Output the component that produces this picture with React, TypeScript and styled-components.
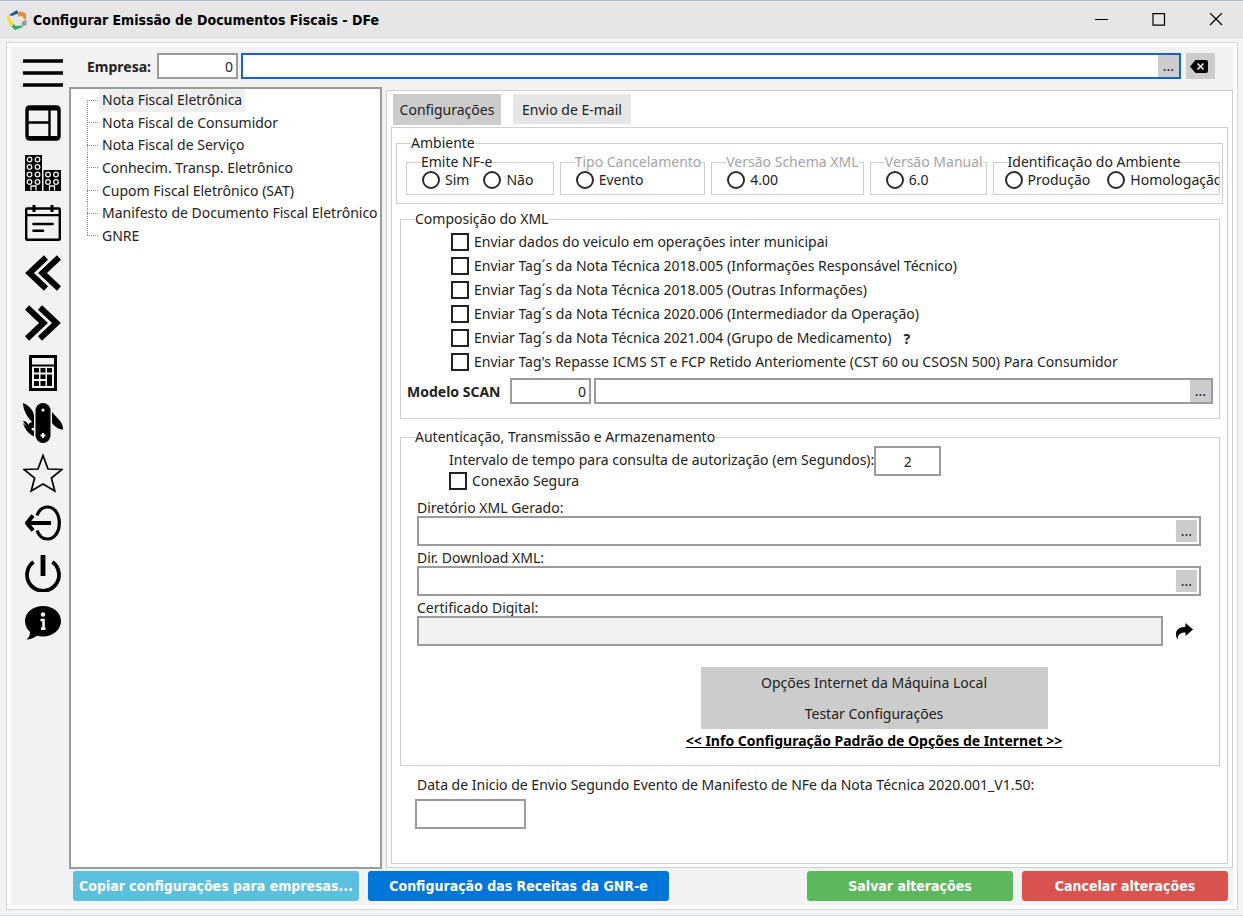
import React from "react";
import styled, { createGlobalStyle } from "styled-components";

const line = "#cfcfcf";
const edge = "#9b9b9b";
const grey = "#cccccc";

const GlobalStyle = createGlobalStyle`
  * { box-sizing: border-box; }
  body { margin: 0; background: #f3f3f3; }
  body, button, input { font-family: "Noto Sans", "Open Sans", sans-serif; font-size: 14px; color: #222; }
  button { border: 0; padding: 0; background: none; cursor: pointer; }
`;

const Window = styled.div`
  min-height: 100vh;
  display: flex;
  flex-direction: column;
  border-top: 1px solid #b3bfd3;
  border-bottom: 1px solid #d3dbe6;
`;

const TitleBar = styled.header`
  display: flex;
  align-items: center;
  height: 38px;
  padding-left: 7px;
  gap: 6px;
  background: #e6e6e6;
`;

const Title = styled.h1`
  flex: 1;
  margin: 0;
  font-family: "DejaVu Sans Condensed", "DejaVu Sans", sans-serif;
  font-size: 14px;
  font-weight: 700;
  color: #000;
`;

const WindowControls = styled.div`
  display: flex;
  gap: 3px;
`;

const WindowButton = styled.button`
  width: 54px;
  height: 36px;
  display: grid;
  place-items: center;
`;

const Frame = styled.div`
  flex: 1;
  display: flex;
  margin: 3px 5px 5px 6px;
  border: 1px solid #d6d6d6;
  padding: 4px;
  background: #fff;
`;

const Shell = styled.div`
  flex: 1;
  min-width: 0;
  display: flex;
  background: #f2f2f2;
`;

const Sidebar = styled.nav`
  width: 58px;
  flex: none;
  display: flex;
  flex-direction: column;
  padding: 1px 0 0 7px;
`;

const SideButton = styled.button`
  height: 50px;
  width: 50px;
  display: grid;
  place-items: center;
`;

const Main = styled.main`
  flex: 1;
  min-width: 0;
  display: flex;
  flex-direction: column;
`;

const CompanyBar = styled.div`
  display: flex;
  align-items: center;
  gap: 3px;
  padding: 6px 18px 8px;
`;

const BoldLabel = styled.label<{ $width: number }>`
  width: ${(p) => p.$width}px;
  flex: none;
  font-weight: 700;
  white-space: nowrap;
`;

const NumberBox = styled.input<{ $width: number; $height?: number; $align?: string }>`
  width: ${(p) => p.$width}px;
  height: ${(p) => p.$height ?? 26}px;
  flex: none;
  padding: 0 3px;
  border: 2px solid ${edge};
  border-radius: 0;
  background: #fff;
  text-align: ${(p) => p.$align ?? "right"};
  outline: none;
`;

const Combo = styled.div<{ $active?: boolean; $tall?: boolean; $readOnly?: boolean }>`
  flex: 1;
  min-width: 0;
  height: ${(p) => (p.$tall ? 30 : 26)}px;
  display: flex;
  padding: ${(p) => (p.$tall ? "2px 2px 2px 0" : "0")};
  border: 2px solid ${(p) => (p.$active ? "#1560dc" : edge)};
  background: ${(p) => (p.$readOnly ? "#f2f2f2" : "#fff")};
`;

const ComboInput = styled.input`
  flex: 1;
  min-width: 0;
  border: 0;
  background: transparent;
  outline: none;
`;

const MoreButton = styled.button`
  width: 21px;
  background: ${grey};
  line-height: 20px;
`;

const ClearButton = styled.button`
  width: 29px;
  height: 26px;
  margin-left: 2px;
  padding-right: 3px;
  display: grid;
  place-items: center;
  background: ${grey};
`;

const Workspace = styled.div`
  flex: 1;
  display: flex;
  gap: 4px;
`;

const TreePanel = styled.aside`
  width: 313px;
  flex: none;
  border: 2px solid ${edge};
  background: #fff;
`;

const Tree = styled.ul`
  height: 158px;
  margin: 0;
  padding: 0 0 0 16px;
  list-style: none;
  display: grid;
  grid-template-rows: repeat(7, 1fr);
`;

const TreeItem = styled.li`
  display: flex;
  align-items: stretch;
  white-space: nowrap;
`;

const Branch = styled.span<{ $edge?: "first" | "last" }>`
  width: 12px;
  background-image: repeating-linear-gradient(#888 0 1px, transparent 1px 2px),
    repeating-linear-gradient(90deg, #888 0 1px, transparent 1px 2px);
  background-repeat: no-repeat;
  background-size: 1px ${(p) => (p.$edge ? "50%" : "100%")}, 11px 1px;
  background-position: ${(p) => (p.$edge === "first" ? "0 100%" : "0 0")}, 0 50%;
`;

const TreeButton = styled.button<{ $selected?: boolean }>`
  padding: 0 3px;
  line-height: 22px;
  background: ${(p) => (p.$selected ? "#efefef" : "transparent")};
`;

const TabPanel = styled.section`
  flex: 1;
  min-width: 0;
  display: flex;
  flex-direction: column;
  margin: 3px 0 1px;
  padding: 3px 4px;
  border: 1px solid ${line};
  background: #fff;
`;

const TabList = styled.div`
  display: flex;
  gap: 12px;
  padding: 0 2px 2px;
`;

const Tab = styled.button<{ $selected?: boolean }>`
  width: ${(p) => (p.$selected ? 108 : 118)}px;
  height: ${(p) => (p.$selected ? 31 : 30)}px;
  background: ${(p) => (p.$selected ? grey : "#e6e6e6")};
`;

const Page = styled.div`
  flex: 1;
  padding: 6px 4px 0;
  border: 1px solid ${line};
`;

const Group = styled.fieldset`
  min-width: 0;
  margin: 0;
  padding: 0;
  border: 1px solid ${line};
`;

const InsetGroup = styled(Group)<{ $gap?: number }>`
  margin: ${(p) => p.$gap ?? 6}px 3px 0 4px;
`;

const Legend = styled.legend<{ $muted?: boolean }>`
  margin-left: 14px;
  padding: 0;
  line-height: 18px;
  white-space: nowrap;
  color: ${(p) => (p.$muted ? "#a3a3a3" : "#222")};
`;

const EnvGrid = styled.div`
  display: grid;
  grid-template-columns: 148fr 146fr 153fr 117fr 228fr;
  gap: 6px;
  padding: 1px 2px 8px 9px;
`;

const RadioRow = styled.div<{ $start?: number; $gap?: number }>`
  display: flex;
  gap: ${(p) => p.$gap ?? 14}px;
  padding: 0 0 5px ${(p) => p.$start ?? 15}px;
  overflow: hidden;
`;

const Choice = styled.label`
  display: flex;
  align-items: center;
  gap: 5px;
  line-height: 18px;
  white-space: nowrap;
`;

const Radio = styled.input.attrs({ type: "radio" })`
  appearance: none;
  width: 18px;
  height: 18px;
  flex: none;
  margin: 0;
  border: 2px solid #2b2b2b;
  border-radius: 50%;
  background: #fff;
  &:checked { box-shadow: inset 0 0 0 3px #fff; background: #2b2b2b; }
`;

const Check = styled.input.attrs({ type: "checkbox" })`
  appearance: none;
  width: 18px;
  height: 18px;
  flex: none;
  margin: 0;
  border: 2px solid #222;
  background: #fff;
  &:checked { box-shadow: inset 0 0 0 3px #fff; background: #222; }
`;

const CheckList = styled.div`
  display: grid;
  grid-auto-rows: 24px;
  padding: 2px 0 4px 50px;
`;

const CheckLine = styled.div`
  display: flex;
  align-items: center;
  gap: 12px;
`;

const Hint = styled.b`
  cursor: help;
`;

const ScanRow = styled.div`
  display: flex;
  align-items: center;
  gap: 3px;
  padding: 0 6px 14px;
`;

const IntervalRow = styled.div`
  display: flex;
  align-items: flex-start;
  padding-left: 48px;
`;

const IntervalColumn = styled.div`
  display: flex;
  flex-direction: column;
`;

const IntervalLabel = styled.label`
  padding-top: 2px;
  line-height: 24px;
`;

const Fields = styled.div`
  display: grid;
  gap: 4px;
  padding: 10px 18px 0 16px;
`;

const Field = styled.div`
  display: flex;
  flex-direction: column;
`;

const FieldLabel = styled.label`
  line-height: 16px;
`;

const FieldRow = styled.div`
  display: flex;
  align-items: center;
`;

const ShareButton = styled.button`
  width: 38px;
  height: 30px;
  padding-left: 4px;
  display: grid;
  place-items: center;
`;

const Actions = styled.div`
  width: 366px;
  margin: 21px 162px 12px auto;
  display: flex;
  flex-direction: column;
  align-items: center;
`;

const ActionButton = styled.button`
  width: 347px;
  height: 31px;
  background: ${grey};
`;

const InfoLink = styled.a`
  line-height: 24px;
  font-weight: 700;
  color: #000;
  white-space: nowrap;
`;

const DateField = styled.div`
  display: flex;
  flex-direction: column;
  align-items: flex-start;
  gap: 3px;
  padding: 8px 19px 0;
`;

const DateLabel = styled.label`
  padding-left: 2px;
  line-height: 22px;
`;

const Footer = styled.footer`
  display: flex;
  gap: 9px;
  padding: 2px 5px 4px 4px;
`;

const FooterButton = styled.button<{ $color: string; $width: number; $push?: boolean }>`
  width: ${(p) => p.$width}px;
  height: 30px;
  margin-left: ${(p) => (p.$push ? "auto" : "0")};
  border-radius: 3px;
  background: ${(p) => p.$color};
  color: #fff;
  font-family: "DejaVu Sans Condensed", "DejaVu Sans", sans-serif;
  font-size: 14px;
  font-weight: 700;
  white-space: nowrap;
`;

const Svg = ({ w, h, box, children }: { w: number; h: number; box?: string; children: React.ReactNode }) => (
  <svg width={w} height={h} viewBox={box ?? `0 0 ${w} ${h}`} fill="none" stroke="#000" aria-hidden="true">
    {children}
  </svg>
);

const windows = (x: number, rows: number[]) =>
  rows.flatMap((y) => [0, 8].map((d) => <circle key={`${x}-${y}-${d}`} cx={x + d} cy={y} r="2.3" />));

const sideIcons: { name: string; icon: React.ReactNode }[] = [
  { name: "Menu", icon: <Svg w={40} h={30}><path d="M0 3h40M0 15h40M0 27h40" strokeWidth="3.6" /></Svg> },
  {
    name: "Painel",
    icon: (
      <Svg w={36} h={36}>
        <rect x="2" y="2" width="32" height="32" rx="2.5" strokeWidth="3.4" />
        <path d="M2 3.500h32M2 33h32" strokeWidth="4" />
        <path d="M24.500 3v30M2 17.500h22" strokeWidth="2.400" />
      </Svg>
    ),
  },
  {
    name: "Empresas",
    icon: (
      <Svg w={36} h={36}>
        <path d="M0 0h17v36H0zM18.500 15H36v21H18.500z" fill="#000" stroke="none" />
        <g stroke="#f2f2f2" strokeWidth="1.300">{windows(4.5, [4.5, 12, 19.5, 27])}{windows(23, [19.5, 27])}</g>
        <path d="M6 35.500v-4.500h5v4.500M24.500 35.500v-4.500h5v4.500" stroke="#f2f2f2" strokeWidth="1.300" />
      </Svg>
    ),
  },
  {
    name: "Agenda",
    icon: (
      <Svg w={36} h={36}>
        <rect x="1.200" y="3.500" width="33.600" height="31.200" rx="1" strokeWidth="2.400" />
        <path d="M1 10.200h34" strokeWidth="2.200" />
        <path d="M9 0v7M27 0v7" strokeWidth="3" />
        <path d="M8.500 19h19M8.500 25.800h9.500" strokeWidth="2.600" strokeLinecap="round" />
      </Svg>
    ),
  },
  { name: "Anterior", icon: <Svg w={36} h={36}><path d="M21 2.500L4.500 18L21 33.500M34 2.500L17.500 18L34 33.500" strokeWidth="6" /></Svg> },
  { name: "Próximo", icon: <Svg w={36} h={36}><path d="M2 2.500L18.500 18L2 33.500M15 2.500L31.500 18L15 33.500" strokeWidth="6" /></Svg> },
  {
    name: "Calculadora",
    icon: (
      <Svg w={28} h={36}>
        <rect x="1.500" y="1.500" width="25" height="33" strokeWidth="3" />
        <path d="M2 10.500h24" strokeWidth="2" />
        <path d="M5 13h5v4.500H5zM11.500 13h5v4.500h-5zM18 13h5v4.500h-5zM5 19.500h5V24H5zM11.500 19.500h5V24h-5zM18 19.500h5v11.500h-5zM5 26h5v5H5zM11.500 26h5v5h-5z" fill="#000" stroke="none" />
      </Svg>
    ),
  },
  {
    name: "Ferramentas",
    icon: (
      <Svg w={40} h={40}>
        <rect x="12.500" y="0" width="15" height="40" rx="7.500" fill="#000" stroke="none" />
        <path d="M0 0C6 2 11 8 11 13v7.500C6 17 0 8 0 0zM29 9l8.500 9.500c1.800 2.500 2.500 5 2.500 8-4 0-8-2.500-11-6.500zM0 18c1.500-.5 4 .5 5.500 4 .5-2.500 3-3.500 5.500-2v5c-1.500-.8-3 0-2.500 1.500L11 28v5.500C6.500 31.500 1.500 26.500 0 20l3.500 3.500z" fill="#000" stroke="none" />
        <circle cx="20" cy="7" r="1.600" fill="#f2f2f2" stroke="none" />
        <path d="M20 30v5M17.500 32.500h5" stroke="#f2f2f2" strokeWidth="2" />
      </Svg>
    ),
  },
  {
    name: "Favoritos",
    icon: <Svg w={40} h={40}><path d="M20 2.500l5 13.500 14 .5-10.600 8.500 3.400 13L20 31 8.200 38l3.400-13L1 16.500l14-.5z" strokeWidth="1.700" /></Svg>,
  },
  {
    name: "Sair",
    icon: (
      <Svg w={36} h={36}>
        <path d="M12 10.500C14 5 18 2 22.500 2 29.500 2 34.300 9 34.300 18s-4.800 16-11.800 16C18 34 14 31 12 25.500" strokeWidth="3.200" />
        <path d="M26 18H3M8 10.500L2 18l6 7.500" strokeWidth="4" />
      </Svg>
    ),
  },
  {
    name: "Desligar",
    icon: (
      <Svg w={36} h={38}>
        <path d="M8.500 8A16 16 0 1 0 27.500 8" strokeWidth="3.800" />
        <path d="M18 1v21" strokeWidth="4.800" />
      </Svg>
    ),
  },
  {
    name: "Informações",
    icon: (
      <Svg w={36} h={34}>
        <path d="M18 0C28 0 36 6.500 36 15s-8 15.500-18 15.500c-2 0-4-.2-6-.8C9 32 5 33.500 1.500 33.500 4 31.500 5 29 5 26 2 23.500 0 19.500 0 15 0 6.500 8 0 18 0z" fill="#000" stroke="none" />
        <circle cx="18" cy="8.500" r="2.200" fill="#f2f2f2" stroke="none" />
        <path d="M15.500 14h3v9M16 22.600h4.500" stroke="#f2f2f2" strokeWidth="2.600" />
      </Svg>
    ),
  },
];

const Logo = () => (
  <svg width="20" height="20" viewBox="0 0 20 20" aria-hidden="true">
    <path d="M2 5L10 0l2 4.500-2-.8L5 6z" fill="#1a5a96" />
    <path d="M12 1l7 2.500V10l-3-2.500-1-1.500-4 .5z" fill="#f08a24" />
    <path d="M19.500 9.500V15l-4.500 1.500-.5-3 1.500-2.500z" fill="#9c9c9c" />
    <path d="M16 17l-8 3-3.500-3.500L7 14l1.500 2 5.500-.5z" fill="#3fa66b" />
    <path d="M0 7l2-1.500L4 10l2.500 3.500L3.500 17 2 13z" fill="#f3e01b" />
  </svg>
);

const treeItems = [
  "Nota Fiscal Eletrônica",
  "Nota Fiscal de Consumidor",
  "Nota Fiscal de Serviço",
  "Conhecim. Transp. Eletrônico",
  "Cupom Fiscal Eletrônico (SAT)",
  "Manifesto de Documento Fiscal Eletrônico",
  "GNRE",
];

const environments = [
  { title: "Emite NF-e", options: ["Sim", "Não"] },
  { title: "Tipo Cancelamento", options: ["Evento"], muted: true },
  { title: "Versão Schema XML", options: ["4.00"], muted: true },
  { title: "Versão Manual", options: ["6.0"], muted: true },
  { title: "Identificação do Ambiente", options: ["Produção", "Homologação"], start: 11, gap: 17 },
];

const xmlOptions = [
  { text: "Enviar dados do veiculo em operações inter municipai" },
  { text: "Enviar Tag´s da Nota Técnica 2018.005 (Informações Responsável Técnico)" },
  { text: "Enviar Tag´s da Nota Técnica 2018.005 (Outras Informações)" },
  { text: "Enviar Tag´s da Nota Técnica 2020.006 (Intermediador da Operação)" },
  { text: "Enviar Tag´s da Nota Técnica 2021.004 (Grupo de Medicamento)", hint: true },
  { text: "Enviar Tag's Repasse ICMS ST e FCP Retido Anteriomente (CST 60 ou CSOSN 500) Para Consumidor" },
];

export default function App() {
  return (
    <Window>
      <GlobalStyle />
      <TitleBar>
        <Logo />
        <Title>Configurar Emissão de Documentos Fiscais - DFe</Title>
        <WindowControls>
          <WindowButton aria-label="Minimizar"><Svg w={14} h={14}><path d="M0 6.500h13" /></Svg></WindowButton>
          <WindowButton aria-label="Maximizar"><Svg w={14} h={14}><path d="M1 .600h11.500v11.500H1z" strokeWidth="1.200" /></Svg></WindowButton>
          <WindowButton aria-label="Fechar"><Svg w={14} h={14}><path d="M1 0l12 12M13 0L1 12" strokeWidth="1.300" /></Svg></WindowButton>
        </WindowControls>
      </TitleBar>
      <Frame>
        <Shell>
          <Sidebar>
            {sideIcons.map((s) => (
              <SideButton key={s.name} aria-label={s.name}>{s.icon}</SideButton>
            ))}
          </Sidebar>
          <Main>
            <CompanyBar>
              <BoldLabel htmlFor="empresa" $width={67}>Empresa:</BoldLabel>
              <NumberBox id="empresa" $width={81} defaultValue="0" />
              <Combo $active>
                <ComboInput aria-label="Nome da empresa" />
                <MoreButton aria-label="Pesquisar empresa">...</MoreButton>
              </Combo>
              <ClearButton aria-label="Limpar">
                <Svg w={18} h={13}>
                  <path d="M5.500 0H16a2 2 0 0 1 2 2v9a2 2 0 0 1-2 2H5.500L0 6.500z" fill="#000" stroke="none" />
                  <path d="M7.500 3.500l6 6M13.500 3.500l-6 6" stroke="#e6e6e6" strokeWidth="1.700" />
                </Svg>
              </ClearButton>
            </CompanyBar>
            <Workspace>
              <TreePanel>
                <Tree>
                  {treeItems.map((item, i) => (
                    <TreeItem key={item}>
                      <Branch $edge={i === 0 ? "first" : i === treeItems.length - 1 ? "last" : undefined} />
                      <TreeButton $selected={i === 0}>{item}</TreeButton>
                    </TreeItem>
                  ))}
                </Tree>
              </TreePanel>
              <TabPanel>
                <TabList role="tablist">
                  <Tab role="tab" aria-selected="true" $selected>Configurações</Tab>
                  <Tab role="tab" aria-selected="false">Envio de E-mail</Tab>
                </TabList>
                <Page role="tabpanel">
                  <Group>
                    <Legend>Ambiente</Legend>
                    <EnvGrid>
                      {environments.map((env) => (
                        <Group key={env.title}>
                          <Legend $muted={env.muted}>{env.title}</Legend>
                          <RadioRow $start={env.start} $gap={env.gap}>
                            {env.options.map((option) => (
                              <Choice key={option}>
                                <Radio name={env.title} />
                                {option}
                              </Choice>
                            ))}
                          </RadioRow>
                        </Group>
                      ))}
                    </EnvGrid>
                  </Group>
                  <InsetGroup>
                    <Legend>Composição do XML</Legend>
                    <CheckList>
                      {xmlOptions.map((o) => (
                        <CheckLine key={o.text}>
                          <Choice><Check />{o.text}</Choice>
                          {o.hint && <Hint>?</Hint>}
                        </CheckLine>
                      ))}
                    </CheckList>
                    <ScanRow>
                      <BoldLabel htmlFor="scan" $width={100}>Modelo SCAN</BoldLabel>
                      <NumberBox id="scan" $width={81} defaultValue="0" />
                      <Combo>
                        <ComboInput aria-label="Descrição do modelo SCAN" />
                        <MoreButton aria-label="Pesquisar modelo">...</MoreButton>
                      </Combo>
                    </ScanRow>
                  </InsetGroup>
                  <InsetGroup $gap={9}>
                    <Legend>Autenticação, Transmissão e Armazenamento</Legend>
                    <IntervalRow>
                      <IntervalColumn>
                        <IntervalLabel htmlFor="intervalo">Intervalo de tempo para consulta de autorização (em Segundos):</IntervalLabel>
                        <Choice><Check />Conexão Segura</Choice>
                      </IntervalColumn>
                      <NumberBox id="intervalo" $width={67} $height={30} $align="center" defaultValue="2" />
                    </IntervalRow>
                    <Fields>
                      <Field>
                        <FieldLabel htmlFor="dir-xml">Diretório XML Gerado:</FieldLabel>
                        <FieldRow>
                          <Combo $tall>
                            <ComboInput id="dir-xml" />
                            <MoreButton aria-label="Escolher diretório">...</MoreButton>
                          </Combo>
                        </FieldRow>
                      </Field>
                      <Field>
                        <FieldLabel htmlFor="dir-download">Dir. Download XML:</FieldLabel>
                        <FieldRow>
                          <Combo $tall>
                            <ComboInput id="dir-download" />
                            <MoreButton aria-label="Escolher diretório de download">...</MoreButton>
                          </Combo>
                        </FieldRow>
                      </Field>
                      <Field>
                        <FieldLabel htmlFor="certificado">Certificado Digital:</FieldLabel>
                        <FieldRow>
                          <Combo $tall $readOnly>
                            <ComboInput id="certificado" readOnly />
                          </Combo>
                          <ShareButton aria-label="Selecionar certificado">
                            <Svg w={18} h={17}>
                              <path d="M10.500 0L18 6.500l-7.500 6.500V9.500C6 9.500 3 11 2.500 16.500 -1 10 1.500 4 10.500 3.800z" fill="#000" stroke="none" />
                            </Svg>
                          </ShareButton>
                        </FieldRow>
                      </Field>
                    </Fields>
                    <Actions>
                      <ActionButton>Opções Internet da Máquina Local</ActionButton>
                      <ActionButton>Testar Configurações</ActionButton>
                      <InfoLink href="#info">&lt;&lt; Info Configuração Padrão de Opções de Internet &gt;&gt;</InfoLink>
                    </Actions>
                  </InsetGroup>
                  <DateField>
                    <DateLabel htmlFor="data-inicio">
                      Data de Inicio de Envio Segundo Evento de Manifesto de NFe da Nota Técnica 2020.001_V1.50:
                    </DateLabel>
                    <NumberBox id="data-inicio" $width={111} $height={30} $align="left" />
                  </DateField>
                </Page>
              </TabPanel>
            </Workspace>
            <Footer>
              <FooterButton $color="#5bc0de" $width={286}>Copiar configurações para empresas...</FooterButton>
              <FooterButton $color="#0275d8" $width={301}>Configuração das Receitas da GNR-e</FooterButton>
              <FooterButton $color="#5cb85c" $width={206} $push>Salvar alterações</FooterButton>
              <FooterButton $color="#d9534f" $width={206}>Cancelar alterações</FooterButton>
            </Footer>
          </Main>
        </Shell>
      </Frame>
    </Window>
  );
}
